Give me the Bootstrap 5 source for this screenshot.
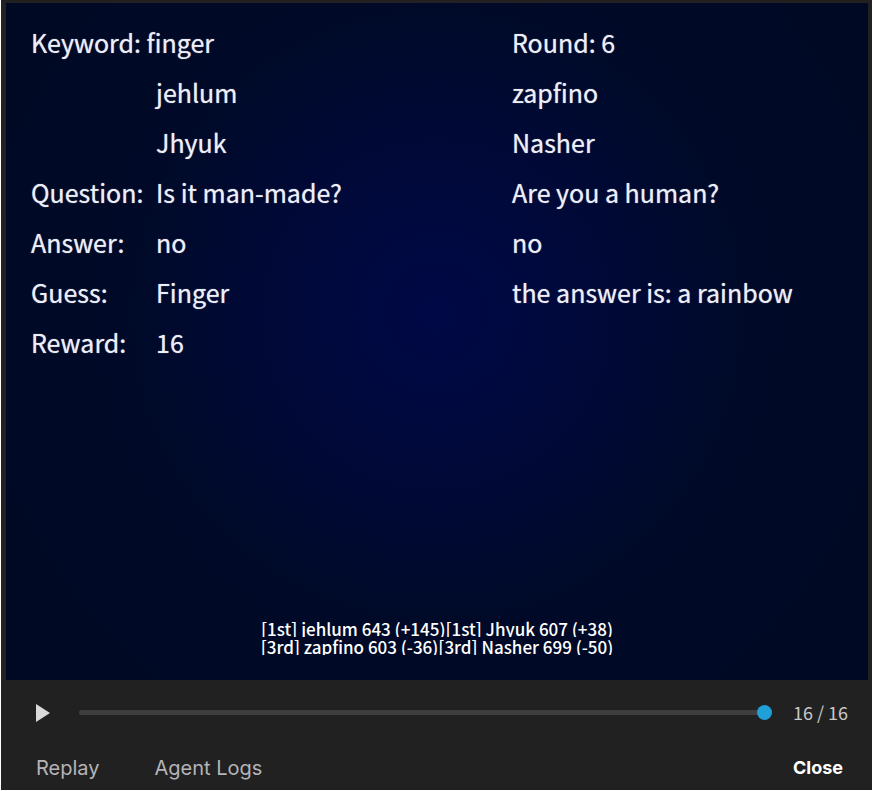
<!DOCTYPE html>
<html lang="en">
<head>
<meta charset="utf-8">
<meta name="viewport" content="width=device-width, initial-scale=1">
<title>Replay</title>
<link href="https://cdn.jsdelivr.net/npm/bootstrap@5.3.0/dist/css/bootstrap.min.css" rel="stylesheet">
<style>
body { background: #fff; font-family: "Noto Sans CJK SC", sans-serif; }
.player { background: #212121; min-height: calc(100vh - 1px); margin-left: 1px; padding: 3px 4px 0 5px; }
.stage { background: radial-gradient(circle at 50% 46%, #000846 0, #00093e 100px, #000934 200px, #000a28 310px, #000924 480px); color: #eceef8; padding: 14px 24px 25px; }
.rounds { width: 100%; table-layout: fixed; font-size: 25px; line-height: 50px; text-shadow: 0 0 1px rgba(236, 238, 248, .7); }
.rounds th, .rounds td { height: 50px; padding: 0 0 0 1px; font-weight: 400; white-space: nowrap; text-align: left; }
.label-col { width: 125px; }
.value-col { width: 356px; }
.score-line { font-size: 17px; font-weight: 500; line-height: 20px; height: 18px; overflow: hidden; color: #fff; }
.controls { height: 64px; padding: 0 20px 0 29px; }
.play { width: 16px; height: 20px; line-height: 0; }
.seek { appearance: none; background: transparent; height: 16px; margin: 0 21px 0 28px; min-width: 0; }
.seek::-webkit-slider-runnable-track { height: 5px; border-radius: 3px; background: #3e3e3e; }
.seek::-webkit-slider-thumb { appearance: none; width: 15px; height: 15px; margin-top: -5px; border-radius: 50%; background: #20a0d8; }
.step-count { font-size: 18px; line-height: 24px; color: #c8c8c8; }
.actions { height: 46px; padding: 2px 25px 0 30px; font-family: Inter, sans-serif; }
.action { font-size: 20px; line-height: 24px; color: #b4b4b8; }
.action-gap { gap: 55px; }
.close-action { font-size: 18px; line-height: 24px; color: #fff; }
</style>
<script src="https://cdn.jsdelivr.net/npm/bootstrap@5.3.0/dist/js/bootstrap.bundle.min.js"></script>
</head>
<body>
<main class="player d-flex flex-column">
  <section class="stage flex-grow-1 d-flex flex-column justify-content-between">
    <table class="rounds">
      <colgroup><col class="label-col"><col class="value-col"><col></colgroup>
      <tbody>
        <tr><td colspan="2">Keyword: finger</td><td>Round: 6</td></tr>
        <tr><td></td><td>jehlum</td><td>zapfino</td></tr>
        <tr><td></td><td>Jhyuk</td><td>Nasher</td></tr>
        <tr><th scope="row">Question:</th><td>Is it man-made?</td><td>Are you a human?</td></tr>
        <tr><th scope="row">Answer:</th><td>no</td><td>no</td></tr>
        <tr><th scope="row">Guess:</th><td>Finger</td><td>the answer is: a rainbow</td></tr>
        <tr><th scope="row">Reward:</th><td>16</td><td></td></tr>
      </tbody>
    </table>
    <div class="text-center">
      <div class="score-line">[1st] jehlum 643 (+145)[1st] Jhyuk 607 (+38)</div>
      <div class="score-line">[3rd] zapfino 603 (-36)[3rd] Nasher 699 (-50)</div>
    </div>
  </section>
  <div class="controls d-flex align-items-center">
    <button type="button" class="play btn p-0 border-0" aria-label="Play"><svg width="16" height="20" viewBox="0 0 16 20" aria-hidden="true"><path d="M1 2 15 11 1 20Z" fill="#dadada"/></svg></button>
    <input type="range" class="seek flex-grow-1" min="0" max="16" value="16" aria-label="Step">
    <span class="step-count">16 / 16</span>
  </div>
  <div class="actions d-flex align-items-center justify-content-between">
    <div class="action-gap d-flex">
      <button type="button" class="action btn p-0 border-0">Replay</button>
      <button type="button" class="action btn p-0 border-0">Agent Logs</button>
    </div>
    <button type="button" class="close-action btn p-0 border-0 fw-bold">Close</button>
  </div>
</main>
</body>
</html>
